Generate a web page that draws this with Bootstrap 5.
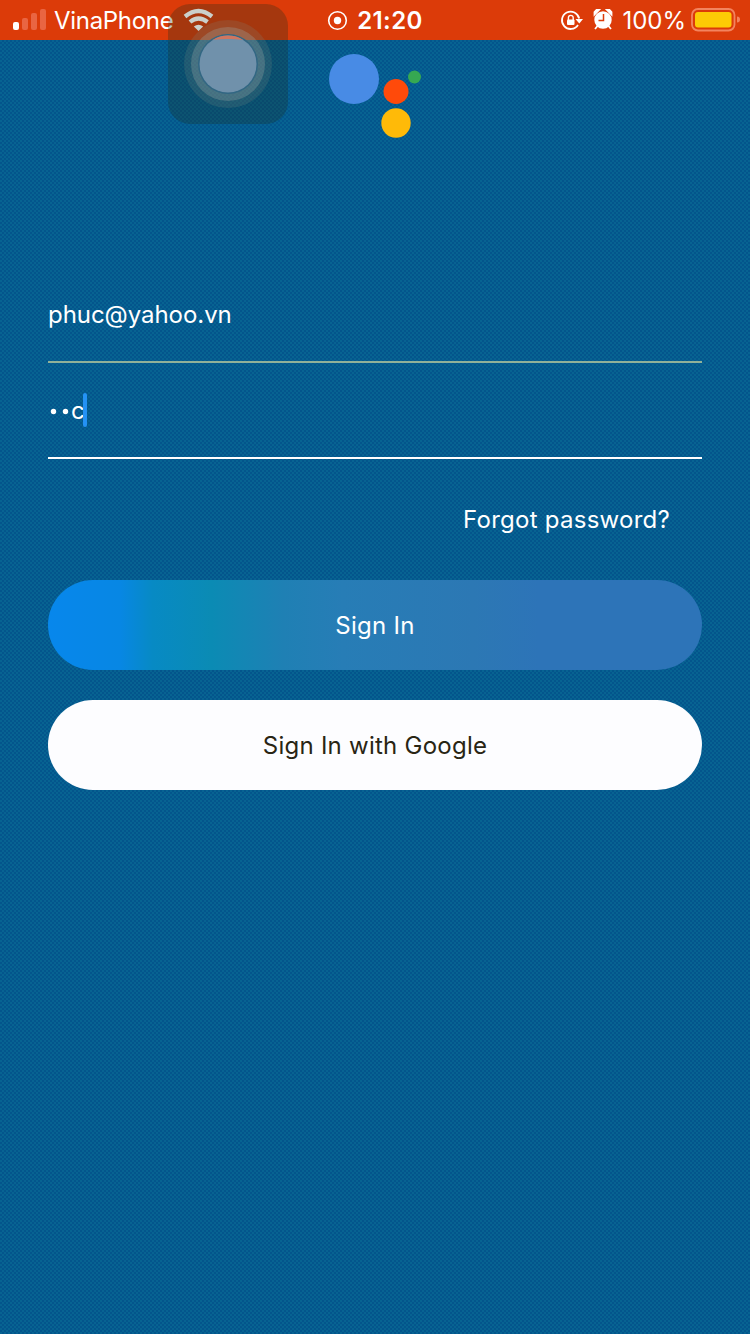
<!DOCTYPE html>
<html lang="en">
<head>
<meta charset="utf-8">
<meta name="viewport" content="width=device-width, initial-scale=1">
<title>Sign In</title>
<link href="https://cdn.jsdelivr.net/npm/bootstrap@5.3.0/dist/css/bootstrap.min.css" rel="stylesheet">
<style>
body{font-family:Inter,"Liberation Sans",sans-serif;background-color:#055c8f;color:#fff;font-size:24px;line-height:32px}
.login-screen{width:750px;height:1334px;overflow:hidden;background:repeating-conic-gradient(#03558c 0 25%,#076392 0 50%) 0 0/4px 4px}
.status-bar{height:40px;background:#dc3b09;display:grid;grid-template-columns:1fr auto 1fr;font-size:24px}
.status-bar svg{display:block;flex:none}
.status-bar span{padding-top:2px}
.carrier{letter-spacing:-.3px}
.clock{letter-spacing:.4px}
.logo-area{height:236px}
.assist{left:168px;top:3px;z-index:3}
.field-row{height:96px;border-bottom:2px solid #91b199}
.field-row span{padding-top:2px}
.email-row{height:87px;padding-bottom:9px}
.email-row span{letter-spacing:-.05px}
.active-field{border-color:#fff}
.caret{width:4px;height:34px;border-radius:2px;background:#2492f5;margin-left:-2px}
.forgot{padding:45px 32px 44px 0;letter-spacing:.25px}
.pill{height:90px;border:0;font-size:24px;letter-spacing:.3px;padding:8px 12px 6px}
.pill-blue{background:linear-gradient(90deg,#0787ec 0%,#0787e4 11%,#078ac4 16%,#0b8bb4 25%,#1f80b4 36%,#277db6 45%,#2c78b4 65%,#2d74b8 75%,#2d74b8 100%)}
.pill-white{background:#fdfdff;color:#292514;letter-spacing:.25px}
</style>
</head>
<body>
<main class="login-screen position-relative">
<header class="status-bar align-items-center">
 <div class="d-flex align-items-center">
  <svg width="54" height="40"><rect x="13" y="22" width="6" height="8" rx="2" fill="#fff"/><g fill="#e96542"><rect x="22" y="18" width="6" height="12" rx="2"/><rect x="31" y="13" width="6" height="17" rx="2"/><rect x="40" y="9" width="6" height="21" rx="2"/></g></svg>
  <span class="carrier">VinaPhone</span>
 </div>
 <div class="d-flex align-items-center">
  <svg width="30" height="40"><circle cx="10.500" cy="20.500" r="8.800" fill="none" stroke="#fff" stroke-width="1.600"/><circle cx="10.500" cy="20.500" r="3.700" fill="#fff"/></svg>
  <span class="fw-semibold clock">21:20</span>
 </div>
 <div class="d-flex align-items-center justify-content-end">
  <svg width="62" height="40" fill="none" stroke="#fff"><path d="M18 25A8.700 8.700 0 1 1 19.200 18.500" stroke-width="1.800"/><path d="M15.500 19h7.500l-3.700 4.500z" fill="#fff" stroke="none"/><rect x="7" y="19.500" width="7.500" height="5.500" rx="1" fill="#fff" stroke="none"/><path d="M8.400 20v-2.200a2.400 2.400 0 0 1 4.800 0V20" stroke-width="1.400"/><circle cx="43" cy="20" r="8.700" fill="#fff" stroke="none"/><path d="M34.500 14.500V12l2-2H39zM51.500 14.500V12l-2-2H47zM37.500 26l-2.500 3M48.500 26l2.500 3" fill="#fff" stroke-width="1.800"/><path d="M43.500 14v6.500h-5" stroke="#dc3b09" stroke-width="1.500"/></svg>
  <span>100%</span>
  <svg class="ms-1" width="60" height="40"><rect x="2" y="9" width="42.500" height="21.500" rx="6" fill="none" stroke="#f3845f" stroke-width="1.800"/><rect x="5" y="12" width="36.500" height="15.500" rx="3" fill="#fdcb05"/><path d="M47 16.500a3 3 0 0 1 0 6z" fill="#f3845f"/></svg>
 </div>
</header>
<svg class="assist position-absolute" width="121" height="121" viewBox="168 3 121 121">
 <rect x="168" y="4" width="120" height="120" rx="22" fill="#192d1c" opacity=".28"/>
 <g fill="none" stroke="#cbd0cb"><path d="M185 16.500Q198.500 5.500 212 16.500M190 22Q198.500 15 207.500 22" stroke-width="4.200"/></g><path d="M193.800 26.500q4.700-3.500 9.400 0l-4.700 4.500z" fill="#cbd0cb"/>
 <circle cx="228" cy="64" r="44" fill="#7d8c80" opacity=".2"/><circle cx="228" cy="64" r="37" fill="#a0aaa4" opacity=".3"/><circle cx="228" cy="64" r="30" fill="#326783"/><circle cx="228" cy="64" r="28.500" fill="#7091ab"/><path d="M212.500 40a29 29 0 0 1 31 0q-15.500-2-31 0" fill="#d0765f"/>
</svg>
<div class="logo-area d-flex justify-content-center align-items-start">
 <svg width="94" height="100" viewBox="328 40 94 100"><circle cx="354" cy="79" r="25" fill="#488be5"/><circle cx="396" cy="91.500" r="12.500" fill="#ff4a0a"/><circle cx="414.500" cy="77" r="6.500" fill="#36a852"/><circle cx="396" cy="123" r="14.700" fill="#ffba08"/></svg>
</div>
<section class="px-5">
 <div class="field-row email-row d-flex align-items-center"><span>phuc@yahoo.vn</span></div>
 <div class="field-row active-field d-flex align-items-center"><svg width="23" height="32"><circle cx="5.500" cy="17.500" r="2.700" fill="#fff"/><circle cx="17.500" cy="17.500" r="2.700" fill="#fff"/></svg><span>c</span><i class="caret"></i></div>
 <div class="d-flex justify-content-end forgot"><span>Forgot password?</span></div>
 <button class="pill pill-blue btn rounded-pill w-100 text-white d-block">Sign In</button>
 <button class="pill pill-white btn rounded-pill w-100 d-block" style="margin-top:30px">Sign In with Google</button>
</section>
</main>
<script src="https://cdn.jsdelivr.net/npm/bootstrap@5.3.0/dist/js/bootstrap.bundle.min.js"></script>
</body>
</html>
